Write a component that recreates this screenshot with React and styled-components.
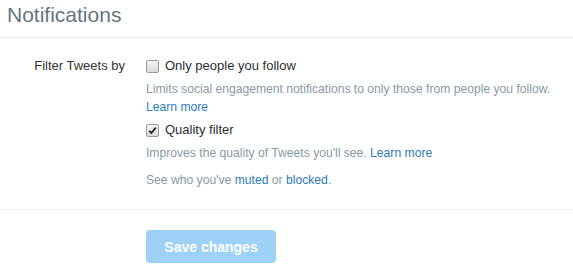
import React from "react";
import styled, { createGlobalStyle } from "styled-components";

const Global = createGlobalStyle`
  html, body { margin: 0; padding: 0; background: #fff; }
  body { font-family: "Liberation Sans", Arial, sans-serif; }
`;

const Page = styled.div`
  width: 573px;
`;

const Header = styled.div`
  padding: 2px 7px 10px;
  border-bottom: 1px solid #e6ecf0;
`;

const Title = styled.h1`
  margin: 0;
  font-size: 21px;
  line-height: 25px;
  font-weight: normal;
  color: #66757f;
`;

const Section = styled.div`
  padding: 18px 0 20px;
  border-bottom: 1px solid #e6ecf0;
  display: grid;
  grid-template-columns: 125px 1fr;
  column-gap: 21px;
`;

const FieldLabel = styled.div`
  font-size: 13px;
  line-height: 20px;
  color: #333;
  text-align: right;
`;

const Controls = styled.div`
  display: flex;
  flex-direction: column;
`;

const CheckRow = styled.label`
  display: flex;
  align-items: center;
  gap: 6px;
  font-size: 13px;
  line-height: 20px;
  color: #292f33;
  margin-top: ${(p) => p.$mt || 0}px;
`;

const Box = styled.span`
  box-sizing: border-box;
  width: 13px;
  height: 13px;
  border: 1px solid #9a9a9a;
  border-radius: 2px;
  background: linear-gradient(#f4f4f4, #dadada);
  display: flex;
  align-items: center;
  justify-content: center;
  flex: none;
`;

const Help = styled.p`
  margin: ${(p) => p.$mt || 4}px 0 0;
  font-size: 12.15px;
  line-height: 18px;
  color: #8899a6;
`;

const Link = styled.a`
  color: #2b7bb9;
  text-decoration: none;
`;

const Footer = styled.div`
  padding: 20px 0 0 146px;
`;

const Button = styled.button`
  width: 130px;
  height: 33px;
  border: none;
  border-radius: 4px;
  background: #9dd1f6;
  color: #fff;
  font-family: "Liberation Sans", Arial, sans-serif;
  font-weight: bold;
  font-size: 14px;
  padding: 0;
`;

const Checkbox = ({ checked }) => (
  <Box>
    {checked && (
      <svg width="9" height="9" viewBox="0 0 9 9">
        <path d="M1.2 4.8 L3.4 7 L7.8 1.6" fill="none" stroke="#222" strokeWidth="1.8" />
      </svg>
    )}
  </Box>
);

export default function App() {
  return (
    <Page>
      <Global />
      <Header>
        <Title>Notifications</Title>
      </Header>
      <Section>
        <FieldLabel>Filter Tweets by</FieldLabel>
        <Controls>
          <CheckRow>
            <Checkbox />
            Only people you follow
          </CheckRow>
          <Help>
            Limits social engagement notifications to only those from people you follow.
            <br />
            <Link href="#">Learn more</Link>
          </Help>
          <CheckRow $mt={4}>
            <Checkbox checked />
            Quality filter
          </CheckRow>
          <Help>
            Improves the quality of Tweets you'll see. <Link href="#">Learn more</Link>
          </Help>
          <Help $mt={9}>
            See who you've <Link href="#">muted</Link> or <Link href="#">blocked</Link>.
          </Help>
        </Controls>
      </Section>
      <Footer>
        <Button>Save changes</Button>
      </Footer>
    </Page>
  );
}
